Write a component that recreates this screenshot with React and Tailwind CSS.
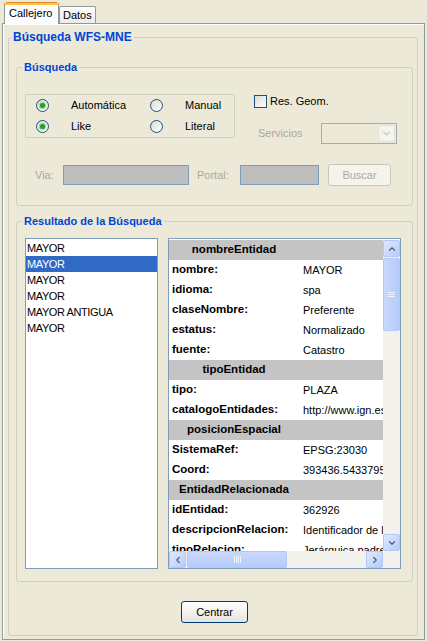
import React from "react";
import { ChevronUp, ChevronDown, ChevronLeft, ChevronRight } from "lucide-react";

const Radio = ({ checked }) => (
  <span className="w-[13px] h-[13px] shrink-0 rounded-full border border-[#1C5180] bg-linear-to-br from-[#DCDCD5] to-white flex items-center justify-center">
    {checked && (
      <span className="w-[5px] h-[5px] rounded-full bg-[#21A121] shadow-[0_0_1px_1px_#8FD88F]" />
    )}
  </span>
);

const Legend = ({ children, size = "text-[12px]", indent = "ml-[2px]" }) => (
  <legend className={`${indent} px-[2px] ${size} leading-[14px] font-bold text-[#0046D5]`}>
    {children}
  </legend>
);

const ScrollBtn = ({ children }) => (
  <div className="w-[17px] h-[17px] shrink-0 rounded-[2px] border border-[#B4C8F6] bg-linear-to-br from-[#E1EAFE] to-[#B5CBF9] flex items-center justify-center text-[#4D6185]">
    {children}
  </div>
);

const rows = [
  { head: "nombreEntidad" },
  { k: "nombre:", v: "MAYOR" },
  { k: "idioma:", v: "spa" },
  { k: "claseNombre:", v: "Preferente" },
  { k: "estatus:", v: "Normalizado" },
  { k: "fuente:", v: "Catastro" },
  { head: "tipoEntidad" },
  { k: "tipo:", v: "PLAZA" },
  { k: "catalogoEntidades:", v: "http://www.ign.es/ign/layoutIn/modeloNomenclatorEspana.do" },
  { head: "posicionEspacial" },
  { k: "SistemaRef:", v: "EPSG:23030" },
  { k: "Coord:", v: "393436.54337955 4702178.3256" },
  { head: "EntidadRelacionada" },
  { k: "idEntidad:", v: "362926" },
  { k: "descripcionRelacion:", v: "Identificador de la entidad" },
  { k: "tipoRelacion:", v: "Jerárquica padre" },
];

const items = ["MAYOR", "MAYOR", "MAYOR", "MAYOR", "MAYOR ANTIGUA", "MAYOR"];

export default function App() {
  return (
    <div className="w-[427px] h-[641px] bg-[#ECE9D8] overflow-hidden font-['Liberation_Sans',Arial,sans-serif] text-[11px] text-black">
      {/* tabs */}
      <div className="flex items-end h-[23px] pl-[4px] pt-[2px]">
        <div className="relative z-10 -mb-px w-[55px] h-[22px] flex flex-col">
          <div className="h-px bg-[#E68B2C] mx-[2px]" />
          <div className="h-[2px] bg-[#FFC73C] border-x border-[#E68B2C] rounded-t-[1px]" />
          <div className="flex-1 bg-[#FCFCFE] border-x border-[#919B9C] pl-[4px] leading-[16px]">
            Callejero
          </div>
        </div>
        <div className="w-[37px] h-[17px] border border-b-0 border-[#919B9C] rounded-t-[2px] bg-linear-to-b from-white to-[#ECEBE6] pl-[3px] leading-[16px]">
          Datos
        </div>
      </div>

      {/* tab panel */}
      <div className="ml-[2px] w-[423px] h-[617px] border border-[#919B9C] shadow-[inset_1px_1px_0_white]">
        <fieldset className="ml-[5px] mt-[6px] w-[410px] h-[606px] border border-[#D0D0BF] rounded-[3px]">
          <Legend>Búsqueda WFS-MNE</Legend>

          {/* Búsqueda */}
          <fieldset className="ml-[7px] mt-[16px] w-[397px] h-[146px] border border-[#D0D0BF] rounded-[3px]">
            <Legend size="text-[11px]" indent="ml-[5px]">Búsqueda</Legend>

            <div className="flex h-[44px] mt-[20px] ml-[8px]">
              <div className="w-[210px] h-[44px] border border-[#D0D0BF] rounded-[2px] pl-[10px] grid grid-cols-[114px_1fr] grid-rows-[21px_21px]">
                <div className="flex items-center"><Radio checked /><span className="ml-[22px]">Automática</span></div>
                <div className="flex items-center"><Radio /><span className="ml-[22px]">Manual</span></div>
                <div className="flex items-center"><Radio checked /><span className="ml-[22px]">Like</span></div>
                <div className="flex items-center"><Radio /><span className="ml-[22px]">Literal</span></div>
              </div>

              <div className="ml-[19px] flex flex-col">
                <div className="mt-px flex items-center h-[13px]">
                  <span className="w-[13px] h-[13px] border border-[#1C5180] bg-linear-to-br from-[#DCDCD5] to-white" />
                  <span className="ml-[3px]">Res. Geom.</span>
                </div>
                <div className="mt-[15px] flex items-center">
                  <span className="w-[67px] pl-[4px] text-[#ACA899]">Servicios</span>
                  <div className="w-[76px] h-[21px] border border-[#A5ACB2] flex justify-end p-px">
                    <div className="w-[17px] h-full rounded-[2px] bg-[#F4F3EE] border border-[#E2E1DA] flex items-center justify-center text-[#C9C7BA]">
                      <ChevronDown size={11} strokeWidth={3} />
                    </div>
                  </div>
                </div>
              </div>
            </div>

            <div className="flex items-center h-[22px] mt-[26px] ml-[18px]">
              <span className="w-[28px] text-[#ACA899]">Via:</span>
              <div className="w-[126px] h-[20px] bg-[#BEBEBE] border border-[#7F9DB9]" />
              <span className="ml-[8px] w-[43px] text-[#ACA899]">Portal:</span>
              <div className="w-[79px] h-[20px] bg-[#BEBEBE] border border-[#7F9DB9]" />
              <div className="ml-[9px] w-[63px] h-[22px] rounded-[3px] border border-[#C9C7BA] bg-[#F5F4EA] text-[#ACA899] flex items-center justify-center">
                Buscar
              </div>
            </div>
          </fieldset>

          {/* Resultado */}
          <fieldset className="ml-[7px] mt-[8px] w-[397px] h-[368px] border border-[#D0D0BF] rounded-[3px]">
            <Legend size="text-[11px]" indent="ml-[5px]">Resultado de la Búsqueda</Legend>

            <div className="flex gap-[10px] mt-[10px] ml-[8px]">
              <div className="w-[133px] h-[331px] bg-white border border-[#7F9DB9] pt-px">
                {items.map((t, i) => (
                  <div
                    key={i}
                    className={`h-[16px] leading-[16px] pl-px tracking-[-0.4px] ${
                      i === 1 ? "bg-[#316AC5] text-white" : ""
                    }`}
                  >
                    {t}
                  </div>
                ))}
              </div>

              <div className="w-[233px] h-[331px] bg-white border border-[#7F9DB9] pt-px grid grid-cols-[214px_17px] grid-rows-[311px_17px]">
                <div className="overflow-hidden">
                  {rows.map((r, i) =>
                    r.head ? (
                      <div key={i} className="h-[20px] bg-[#C4C4C4] flex items-center">
                        <span className="w-[130px] text-center font-bold text-[11.5px]">{r.head}</span>
                      </div>
                    ) : (
                      <div key={i} className="h-[20px] flex items-center whitespace-nowrap">
                        <span className="w-[134px] shrink-0 pl-[3px] font-bold text-[11.5px]">{r.k}</span>
                        <span>{r.v}</span>
                      </div>
                    )
                  )}
                </div>

                <div className="bg-[#F3F1EC] flex flex-col">
                  <ScrollBtn><ChevronUp size={10} strokeWidth={3} /></ScrollBtn>
                  <div className="flex-1 pt-px">
                    <div className="h-[73px] rounded-[2px] border border-[#B4C8F6] bg-linear-to-r from-[#C9D8FC] to-[#B5CBF9] flex flex-col items-center justify-center gap-[1px]">
                      <span className="w-[7px] h-px bg-[#EEF4FE]" />
                      <span className="w-[7px] h-px bg-[#EEF4FE]" />
                      <span className="w-[7px] h-px bg-[#EEF4FE]" />
                    </div>
                  </div>
                  <ScrollBtn><ChevronDown size={10} strokeWidth={3} /></ScrollBtn>
                </div>

                <div className="bg-[#F3F1EC] flex">
                  <ScrollBtn><ChevronLeft size={10} strokeWidth={3} /></ScrollBtn>
                  <div className="flex-1 pl-px">
                    <div className="w-[100px] h-full rounded-[2px] border border-[#B4C8F6] bg-linear-to-b from-[#C9D8FC] to-[#B5CBF9] flex items-center justify-center gap-[1px]">
                      <span className="w-px h-[7px] bg-[#EEF4FE]" />
                      <span className="w-px h-[7px] bg-[#EEF4FE]" />
                      <span className="w-px h-[7px] bg-[#EEF4FE]" />
                      <span className="w-px h-[7px] bg-[#EEF4FE]" />
                    </div>
                  </div>
                  <ScrollBtn><ChevronRight size={10} strokeWidth={3} /></ScrollBtn>
                </div>
                <div className="bg-[#F3F1EC]" />
              </div>
            </div>
          </fieldset>

          <div className="flex justify-center pl-[3px] mt-[19px]">
            <div className="w-[67px] h-[22px] rounded-[3px] border border-[#003C74] bg-linear-to-b from-white to-[#E6E5DE] flex items-center justify-center">
              Centrar
            </div>
          </div>
        </fieldset>
      </div>
    </div>
  );
}
